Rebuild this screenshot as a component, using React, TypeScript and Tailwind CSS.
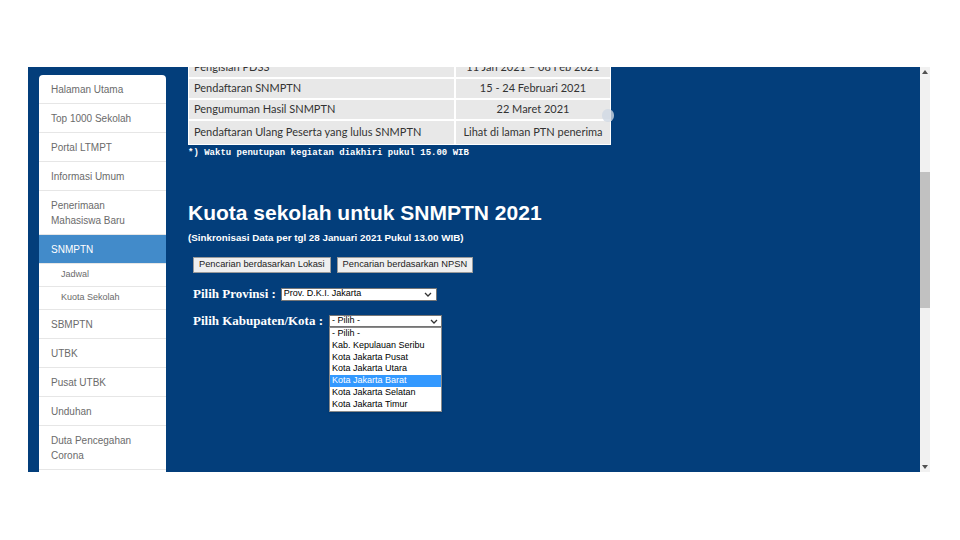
import React from "react";

type MenuItem = {
    label: string;
    lines?: number;
    active?: boolean;
    sub?: boolean;
};

const menu: MenuItem[] = [
    {label: "Halaman Utama"},
    {label: "Top 1000 Sekolah"},
    {label: "Portal LTMPT"},
    {label: "Informasi Umum"},
    {label: "Penerimaan Mahasiswa Baru", lines: 2},
    {label: "SNMPTN", active: true},
    {label: "Jadwal", sub: true},
    {label: "Kuota Sekolah", sub: true},
    {label: "SBMPTN"},
    {label: "UTBK"},
    {label: "Pusat UTBK"},
    {label: "Unduhan"},
    {label: "Duta Pencegahan Corona", lines: 2},
];

const schedule = [
    ["Pengisian PDSS", "11 Jan 2021 – 08 Feb 2021"],
    ["Pendaftaran SNMPTN", "15 - 24 Februari 2021"],
    ["Pengumuman Hasil SNMPTN", "22 Maret 2021"],
    ["Pendaftaran Ulang Peserta yang lulus SNMPTN", "Lihat di laman PTN penerima"],
];

const kotaOptions = [
    "- Pilih -",
    "Kab. Kepulauan Seribu",
    "Kota Jakarta Pusat",
    "Kota Jakarta Utara",
    "Kota Jakarta Barat",
    "Kota Jakarta Selatan",
    "Kota Jakarta Timur",
];

const Chevron = () => (
    <svg width="8" height="5" viewBox="0 0 8 5" className="shrink-0">
        <path d="M1 1l3 3 3-3" fill="none" stroke="#333" strokeWidth="1.3"/>
    </svg>
);

const SideMenu = () => (
    <div className="w-[127px] shrink-0 mt-[8px] ml-[11px] bg-white rounded-t-[4px] font-['Liberation_Sans',Arial,sans-serif] text-[#6b6b6b]">
        {menu.map((item) => {
            const height = item.sub ? "h-[23px]" : item.lines === 2 ? "h-[44px]" : "h-[29px]";
            return (
                <div
                    key={item.label}
                    className={
                        "flex items-center border-b border-[#e6e6e6] " + height + " " +
                        (item.active ? "bg-[#428bca] text-white" : "") + " " +
                        (item.sub ? "pl-[22px] text-[9px]" : "pl-[12px] pr-[14px] text-[10px] leading-[15px]")
                    }
                >
                    {item.label}
                </div>
            );
        })}
    </div>
);

const ScheduleTable = () => (
    <div className="relative w-[423px] -mt-[10px] bg-white p-[1px] flex flex-col gap-[2px] font-['Lato','Open_Sans',sans-serif] text-[11px] text-[#333]">
        {schedule.map(([name, date], i) => (
            <div key={name} className={"flex gap-[2px] " + (i === 3 ? "h-[23px]" : "h-[19px]")}>
                <div className="w-[265px] bg-[#e8e8e8] flex items-center pl-[5px]">{name}</div>
                <div className="flex-1 bg-[#e8e8e8] flex items-center justify-center">{date}</div>
            </div>
        ))}
        <div className="absolute right-[-3px] top-[52px] w-[12px] h-[13px] rounded-full bg-[#cfd8e3] opacity-80"/>
    </div>
);

const KotaSelect = () => (
    <div className="relative w-[113px]">
        <div className="h-[12px] bg-white border border-[#767676] flex items-center justify-between pl-[2px] pr-[3px] text-[9px] text-black">
            <span>- Pilih -</span>
            <Chevron/>
        </div>
        <div className="absolute left-0 top-[12px] w-[113px] bg-white border border-[#8a8a8a] text-[9px] text-black shadow-sm">
            {kotaOptions.map((opt) => (
                <div
                    key={opt}
                    className={"h-[11.8px] leading-[11.8px] pl-[2px] " + (opt === "Kota Jakarta Barat" ? "bg-[#3399ff] text-white" : "")}
                >
                    {opt}
                </div>
            ))}
        </div>
    </div>
);

const KuotaSection = () => (
    <div className="flex flex-col">
        <h1 className="mt-[42px] text-[21px] leading-[24px] font-bold text-white font-['Liberation_Sans',Arial,sans-serif]">
            Kuota sekolah untuk SNMPTN 2021
        </h1>
        <p className="mt-[7px] text-[9.8px] leading-[12px] font-bold text-white font-['Liberation_Sans',Arial,sans-serif]">
            (Sinkronisasi Data per tgl 28 Januari 2021 Pukul 13.00 WIB)
        </p>
        <div className="mt-[13px] ml-[5px] flex gap-[6px] font-['Liberation_Sans',Arial,sans-serif]">
            <button className="h-[16px] px-[5px] bg-[#efefef] border border-[#9a9a9a] text-[9.3px] text-[#222]">
                Pencarian berdasarkan Lokasi
            </button>
            <button className="h-[16px] px-[5px] bg-[#efefef] border border-[#9a9a9a] text-[9.3px] text-[#222]">
                Pencarian berdasarkan NPSN
            </button>
        </div>
        <div className="mt-[13px] ml-[5px] flex items-center">
            <span className="text-[13px] leading-[16px] font-bold text-white font-['Liberation_Serif','Times_New_Roman',serif]">
                Pilih Provinsi :
            </span>
            <div className="ml-[5px] w-[156px] h-[13px] bg-white border border-[#767676] flex items-center justify-between pl-[2px] pr-[4px] text-[9px] text-black font-['Liberation_Sans',Arial,sans-serif]">
                <span>Prov. D.K.I. Jakarta</span>
                <Chevron/>
            </div>
        </div>
        <div className="mt-[11px] ml-[5px] flex items-center">
            <span className="text-[13px] leading-[16px] font-bold text-white font-['Liberation_Serif','Times_New_Roman',serif]">
                Pilih Kabupaten/Kota :
            </span>
            <div className="ml-[6px] font-['Liberation_Sans',Arial,sans-serif]">
                <KotaSelect/>
            </div>
        </div>
    </div>
);

const Scrollbar = () => (
    <div className="w-[10px] bg-[#f1f1f1] flex flex-col items-center">
        <svg width="6" height="4" viewBox="0 0 6 4" className="mt-[3px]">
            <path d="M3 0L6 4H0z" fill="#505050"/>
        </svg>
        <div className="mt-[98px] w-[10px] h-[136px] bg-[#c1c1c1]"/>
        <div className="flex-1"/>
        <svg width="6" height="4" viewBox="0 0 6 4" className="mb-[3px]">
            <path d="M0 0h6L3 4z" fill="#505050"/>
        </svg>
    </div>
);

export default function App() {
    return (
        <div className="w-[960px] h-[540px] bg-white pt-[67px] pl-[28px]">
            <div className="flex w-[902px] h-[405px]">
                <div className="flex-1 flex bg-[#033e7b] overflow-hidden">
                    <SideMenu/>
                    <div className="ml-[22px] flex flex-col">
                        <ScheduleTable/>
                        <p className="mt-[3px] text-[9px] leading-[11px] font-bold text-white font-['Liberation_Mono','Courier_New',monospace]">
                            *) Waktu penutupan kegiatan diakhiri pukul 15.00 WIB
                        </p>
                        <KuotaSection/>
                    </div>
                </div>
                <Scrollbar/>
            </div>
        </div>
    );
}
